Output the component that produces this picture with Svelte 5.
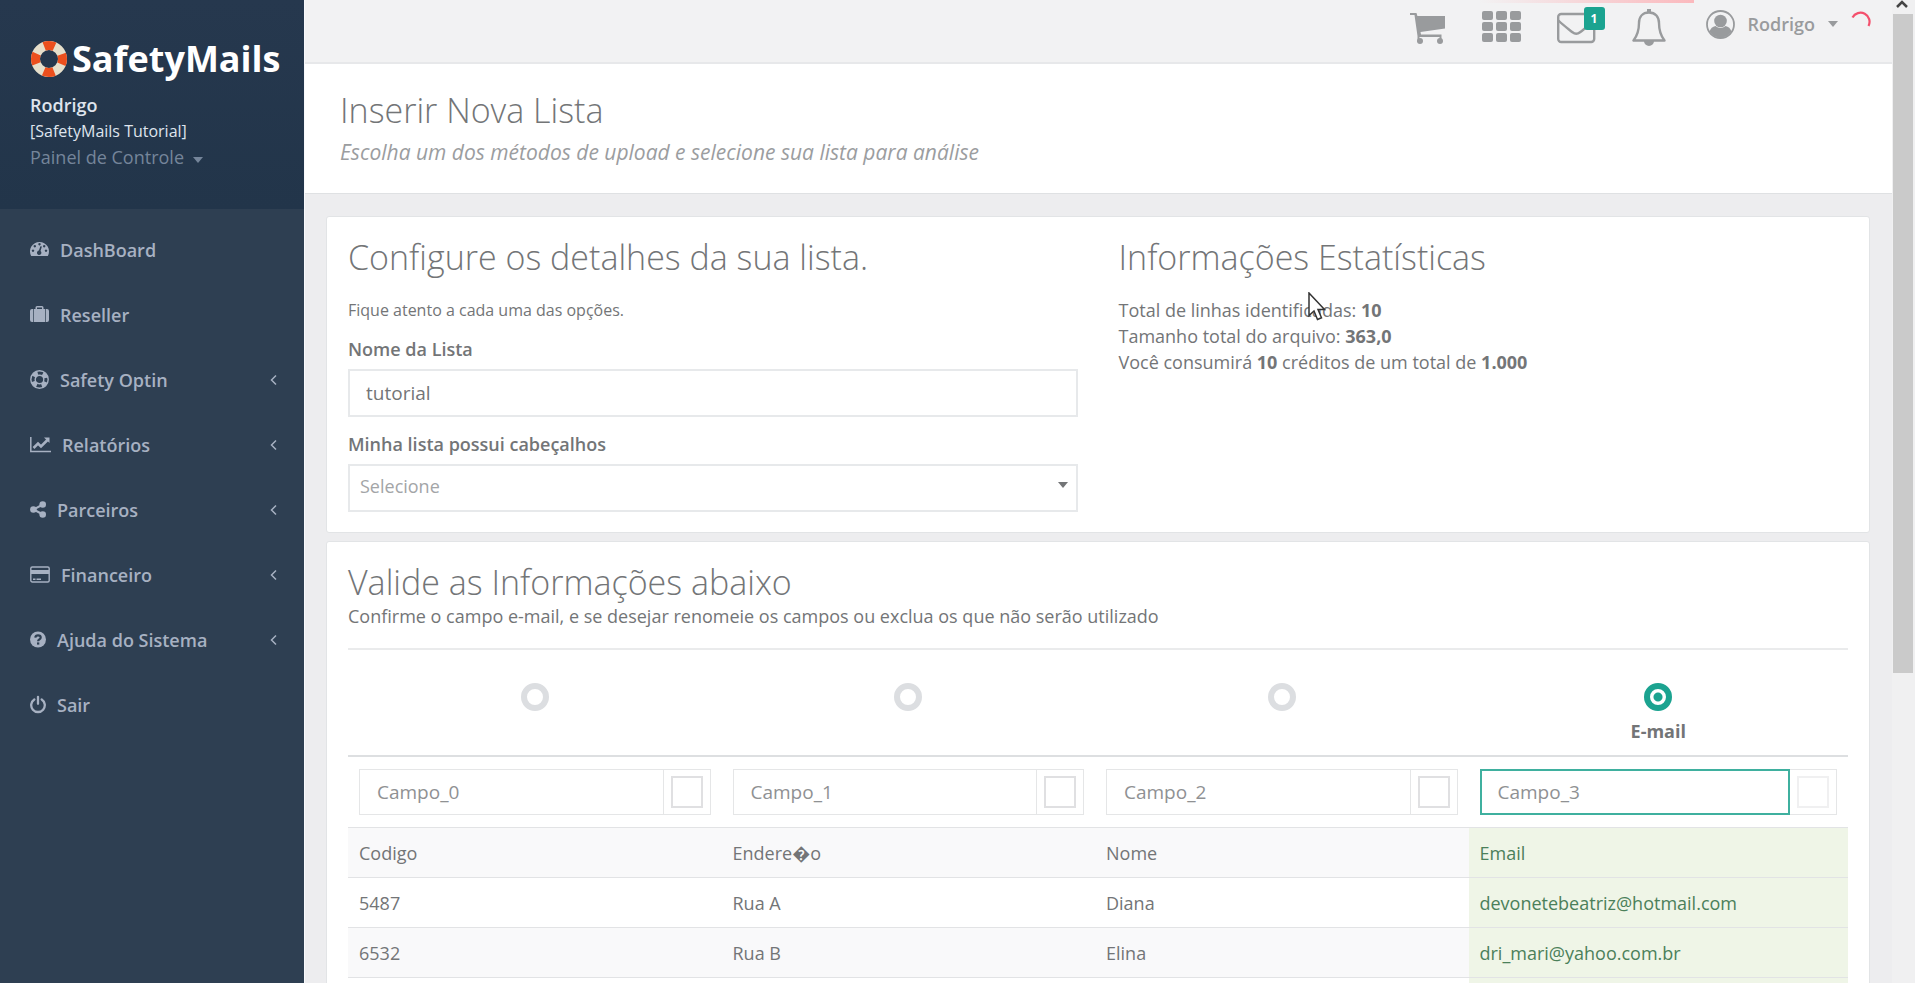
<script>
  let listName = 'tutorial';
  let hasHeader = '';
  let emailColumn = 3;

  const menu = [
    {
      label: 'DashBoard',
      width: 19,
      icon: '<path fill="currentColor" fill-rule="evenodd" d="M1.2 16A9.5 9.5 0 1 1 17.800 16ZM9.500 3a1.200 1.200 0 1 0 .01 0ZM4.800 5a1.200 1.200 0 1 0 .01 0ZM14.200 5a1.200 1.200 0 1 0 .01 0ZM3 9.500a1.200 1.200 0 1 0 .01 0ZM16 9.500a1.200 1.200 0 1 0 .01 0ZM10.400 6.200 8.900 10.600a2.200 2.200 0 1 0 1.600.400L11.900 6.600Z"/>'
    },
    {
      label: 'Reseller',
      width: 19,
      icon: '<path fill="currentColor" d="M0 6a2 2 0 0 1 2-2h1v13H2a2 2 0 0 1-2-2ZM3.700 4h1.800V2.500A1.500 1.500 0 0 1 7 1h5a1.500 1.500 0 0 1 1.500 1.500V4h1.800v13H3.700ZM7 2.500V4h5V2.500ZM16 4h1a2 2 0 0 1 2 2v9a2 2 0 0 1-2 2h-1Z"/>'
    },
    {
      label: 'Safety Optin',
      width: 19,
      children: true,
      icon: '<g fill="none" stroke="currentColor"><circle cx="9.500" cy="9.500" r="8.700" stroke-width="1.400"/><circle cx="9.500" cy="9.500" r="4.300" stroke-width="1.400"/><circle cx="9.500" cy="9.500" r="6.500" stroke-width="4.500" stroke-dasharray="5.100 5.110" stroke-dashoffset="-2.550"/></g>'
    },
    {
      label: 'Relatórios',
      width: 21,
      children: true,
      icon: '<path fill="none" stroke="currentColor" stroke-width="1.500" d="M.8 2v14.500H21"/><path fill="none" stroke="currentColor" stroke-width="2.600" d="m3.500 13 4.500-4.500 3 3 6.500-6.500"/><path fill="currentColor" d="M14 2.500h5.500V8Z"/>'
    },
    {
      label: 'Parceiros',
      width: 16,
      children: true,
      icon: '<path fill="none" stroke="currentColor" stroke-width="2" d="M13 4.500 3.500 9.500l9.500 5"/><g fill="currentColor"><circle cx="12.700" cy="4.500" r="3.300"/><circle cx="3.400" cy="9.500" r="3.300"/><circle cx="12.700" cy="14.500" r="3.300"/></g>'
    },
    {
      label: 'Financeiro',
      width: 20,
      children: true,
      icon: '<rect x=".8" y="2" width="18.400" height="15" rx="1.500" fill="none" stroke="currentColor" stroke-width="1.400"/><path fill="currentColor" d="M1 5h18v4H1ZM3 13.500h2.500V15H3ZM6.500 13.500H11V15H6.500Z"/>'
    },
    {
      label: 'Ajuda do Sistema',
      width: 16,
      children: true,
      icon: '<circle cx="8" cy="9.500" r="8" fill="currentColor"/><path fill="none" stroke="#2e3f52" stroke-width="2.200" d="M5.300 7.700c.2-1.700 1.300-2.300 2.700-2.300 1.600 0 2.700.8 2.700 2.100 0 1.800-2.600 1.900-2.600 3.700"/><path fill="#2e3f52" d="M7 12.400h2.300v2.200H7Z"/>'
    },
    {
      label: 'Sair',
      width: 16,
      icon: '<path fill="none" stroke="currentColor" stroke-width="2.300" stroke-linecap="round" d="M4.300 4.500a6.800 6.800 0 1 0 7.400 0M8 1.800v7"/>'
    }
  ];

  let fields = ['Campo_0', 'Campo_1', 'Campo_2', 'Campo_3'];

  const rows = [
    ['Codigo', 'Endere\uFFFDo', 'Nome', 'Email'],
    ['5487', 'Rua A', 'Diana', 'devonetebeatriz@hotmail.com'],
    ['6532', 'Rua B', 'Elina', 'dri_mari@yahoo.com.br'],
    ['', '', '', '']
  ];
</script>

<div class="app">
  <aside class="sidebar">
    <div class="profile">
      <a class="logo" href="#home">
        <svg width="38" height="38" viewBox="0 0 38 38" aria-hidden="true">
          <circle cx="19" cy="19" r="13.500" fill="none" stroke="#e6dfcb" stroke-width="9" />
          <circle cx="19" cy="19" r="13.500" fill="none" stroke="#ec4f1d" stroke-width="9" stroke-dasharray="10.600 10.600" stroke-dashoffset="5.300" />
        </svg>
        <span>SafetyMails</span>
      </a>
      <strong class="name">Rodrigo</strong>
      <span class="company">[SafetyMails Tutorial]</span>
      <button class="panel-toggle" type="button">Painel de Controle <i class="caret"></i></button>
    </div>
    <nav>
      {#each menu as item}
        <a href="#menu">
          <svg width={item.width} height="19" viewBox="0 0 {item.width} 19" aria-hidden="true">{@html item.icon}</svg>
          <span>{item.label}</span>
          {#if item.children}
            <svg class="arrow" width="7" height="12" viewBox="0 0 7 12" aria-hidden="true">
              <path d="M6 1.500 1.500 6 6 10.500" fill="none" stroke="currentColor" stroke-width="1.500" />
            </svg>
          {/if}
        </a>
      {/each}
    </nav>
  </aside>

  <main>
    <header class="topbar">
      <button type="button" aria-label="Carrinho">
        <svg width="36" height="32" viewBox="0 0 36 32">
          <path d="M0 1h6.500l.9 3H35v12.500L10.500 20l.5 2.500h20.500V30h-2v-5H9.500v5h-2v-6L4.500 3H0Z" fill="currentColor" />
          <circle cx="10" cy="29" r="3" fill="currentColor" />
          <circle cx="30" cy="29" r="3" fill="currentColor" />
        </svg>
      </button>
      <button type="button" aria-label="Aplicativos">
        <svg width="39" height="34" viewBox="0 0 39 34">
          <g fill="currentColor">
            {#each [0, 11, 22] as y}
              {#each [0, 14, 28] as x}
                <rect {x} {y} width="11" height="9" rx="2" />
              {/each}
            {/each}
          </g>
        </svg>
      </button>
      <button type="button" class="mail" aria-label="Mensagens">
        <svg width="39" height="32" viewBox="0 0 39 32">
          <rect x="1.200" y="2" width="36" height="28" rx="3" fill="none" stroke="currentColor" stroke-width="2.400" />
          <path d="M1.500 8.500c5 5 10 8.500 14 11.800 2.500 2 5 2 7.500 0 4-3.300 9-6.800 14-11.800" fill="none" stroke="currentColor" stroke-width="2.400" />
        </svg>
        <span class="badge">1</span>
      </button>
      <button type="button" aria-label="Alertas">
        <svg width="34" height="38" viewBox="0 0 34 38">
          <path d="M17 3.500C10.500 3.500 7 8 7 14c0 9-2 13-5.500 17.500h31C29 27 27 23 27 14c0-6-3.500-10.500-10-10.500Z" fill="none" stroke="currentColor" stroke-width="2.400" stroke-linejoin="round" />
          <path d="M15 0h4v4h-4ZM12 32h10a5 5 0 0 1-10 0Z" fill="currentColor" />
        </svg>
      </button>
      <button type="button" class="user">
        <svg width="29" height="29" viewBox="0 0 29 29" aria-hidden="true">
          <circle cx="14.500" cy="14.500" r="13.500" fill="none" stroke="currentColor" stroke-width="1.800" />
          <circle cx="14.500" cy="11" r="6.300" fill="currentColor" />
          <path d="M3.500 21.500c1-3 3-5 6-5.500 3 2.500 7 2.500 10 0 3 .5 5 2.500 6 5.500a13 13 0 0 1-22 0Z" fill="currentColor" />
        </svg>
        <span>Rodrigo</span>
        <i class="caret"></i>
      </button>
      <svg class="spinner" width="20" height="20" viewBox="0 0 20 20" aria-hidden="true">
        <path d="M1.500 8.500A9 9 0 0 1 17.500 17" fill="none" stroke="#f4506c" stroke-width="2.200" />
      </svg>
    </header>

    <section class="heading">
      <h1>Inserir Nova Lista</h1>
      <p>Escolha um dos métodos de upload e selecione sua lista para análise</p>
    </section>

    <div class="content">
      <section class="card details">
        <form on:submit|preventDefault>
          <h2>Configure os detalhes da sua lista.</h2>
          <small>Fique atento a cada uma das opções.</small>
          <label for="listName">Nome da Lista</label>
          <input id="listName" type="text" bind:value={listName} />
          <label for="hasHeader">Minha lista possui cabeçalhos</label>
          <div class="select">
            <select id="hasHeader" bind:value={hasHeader}>
              <option value="">Selecione</option>
              <option value="1">Sim</option>
              <option value="0">Não</option>
            </select>
            <i class="caret"></i>
          </div>
        </form>
        <div class="stats">
          <h2>Informações Estatísticas</h2>
          <p>
            Total de linhas identificadas: <b>10</b><br />
            Tamanho total do arquivo: <b>363,0</b><br />
            Você consumirá <b>10</b> créditos de um total de <b>1.000</b>
          </p>
          <svg class="pointer" width="20" height="30" viewBox="0 0 20 30" aria-hidden="true">
            <path d="M1 1v22.500l5-4.500 3.500 8.500 4-1.700-3.500-8.300h6.500Z" fill="#fff" stroke="#333" stroke-width="1.500" />
          </svg>
        </div>
      </section>

      <section class="card">
        <h2>Valide as Informações abaixo</h2>
        <p>Confirme o campo e-mail, e se desejar renomeie os campos ou exclua os que não serão utilizado</p>
        <table>
          <thead>
            <tr>
              {#each fields as field, i}
                <th>
                  <label>
                    <input type="radio" name="emailColumn" value={i} bind:group={emailColumn} aria-label={field} />
                    {#if emailColumn === i}<span>E-mail</span>{/if}
                  </label>
                </th>
              {/each}
            </tr>
          </thead>
          <tbody>
            <tr class="fields">
              {#each fields as field, i}
                <td>
                  <div class="group" class:active={emailColumn === i}>
                    <input type="text" aria-label="Nome do campo {i}" bind:value={fields[i]} />
                    <span class="addon">
                      <input type="checkbox" aria-label="Excluir {field}" disabled={emailColumn === i} />
                    </span>
                  </div>
                </td>
              {/each}
            </tr>
            {#each rows as row}
              <tr>
                {#each row as cell, i}
                  <td class:email={emailColumn === i}>{cell}</td>
                {/each}
              </tr>
            {/each}
          </tbody>
        </table>
      </section>
    </div>
  </main>

  <div class="scrollbar" aria-hidden="true">
    <svg width="23" height="14" viewBox="0 0 23 14">
      <path d="m5 7 5-5 5 5" fill="none" stroke="#444" stroke-width="2.500" />
    </svg>
    <div class="thumb"></div>
  </div>
</div>

<style>
  :global(body) {
    margin: 0;
    font-family: 'Open Sans', 'Noto Sans', sans-serif;
    font-size: 18px;
    line-height: 26px;
    color: #737577;
  }

  .app {
    display: flex;
    height: 100vh;
    overflow: hidden;
    background: #ededef;
  }

  h1, h2, p {
    margin: 0;
  }

  a {
    text-decoration: none;
  }

  button {
    padding: 0;
    border: 0;
    background: none;
    font: inherit;
    color: inherit;
    cursor: pointer;
  }

  input, select {
    box-sizing: border-box;
    font: inherit;
    color: inherit;
    margin: 0;
  }

  svg {
    display: block;
    flex: none;
  }

  .caret {
    display: inline-block;
    border: 5px solid transparent;
    border-top: 6px solid currentColor;
    border-bottom: 0;
  }

  .sidebar {
    flex: none;
    width: 304px;
    background: #2e3f52;
    color: #a7b1c2;
  }

  .profile {
    box-sizing: border-box;
    display: flex;
    flex-direction: column;
    align-items: flex-start;
    height: 209px;
    padding: 34px 20px 0 30px;
    background: linear-gradient(#26384e, #22354a);
  }

  .logo {
    display: flex;
    align-items: center;
    gap: 4px;
    margin-bottom: 8px;
    font-size: 36px;
    font-weight: 700;
    line-height: 50px;
    color: #fff;
  }

  .name {
    font-weight: 600;
    color: #dfe4ed;
  }

  .company {
    font-size: 16px;
    color: #dfe4ed;
  }

  .panel-toggle {
    color: #75859a;
  }

  .panel-toggle .caret {
    margin-left: 4px;
    vertical-align: 1px;
  }

  nav {
    padding-top: 8px;
  }

  nav a {
    display: flex;
    align-items: center;
    gap: 11px;
    height: 65px;
    padding: 0 27px 0 30px;
    font-weight: 600;
    color: inherit;
  }

  .arrow {
    margin-left: auto;
  }

  main {
    flex: 1;
    min-width: 0;
    border-left: 1px solid #f8f9fc;
  }

  .topbar {
    position: relative;
    box-sizing: border-box;
    display: flex;
    align-items: flex-start;
    justify-content: flex-end;
    gap: 36px;
    height: 64px;
    padding: 9px 21px 0 0;
    border-bottom: 2px solid #e7e8ea;
    background: #f2f2f3;
    color: #999b9d;
  }

  .topbar::before {
    content: '';
    position: absolute;
    top: 0;
    right: 198px;
    width: 215px;
    height: 3px;
    background: linear-gradient(to right, transparent, #fbb9bd);
  }

  .topbar button {
    display: flex;
    align-items: center;
    height: 38px;
  }

  .mail {
    position: relative;
  }

  .badge {
    position: absolute;
    top: -2px;
    right: -9px;
    width: 21px;
    border-radius: 3px;
    background: #1ba390;
    font-size: 12px;
    font-weight: 700;
    line-height: 23px;
    text-align: center;
    color: #fff;
  }

  .topbar .user {
    gap: 13px;
    height: 30px;
    margin-left: 4px;
    font-weight: 600;
  }

  .spinner {
    margin-left: -23px;
  }

  .heading {
    padding: 25px 35px 20px;
    border-bottom: 1px solid #dfe1e3;
    background: #fff;
  }

  h1, h2 {
    font-size: 34px;
    font-weight: 300;
    line-height: 42px;
  }

  .heading p {
    font-size: 21px;
    font-style: italic;
    line-height: 42px;
    color: #9b9d9f;
  }

  .content {
    padding: 22px 22px 0 21px;
  }

  .card {
    margin-bottom: 8px;
    padding: 19px 21px 20px;
    border: 1px solid #e2e4e6;
    border-radius: 3px;
    background: #fff;
  }

  .details {
    display: grid;
    grid-template-columns: 1fr 1fr;
    gap: 41px;
  }

  .details h2 {
    margin-bottom: 19px;
  }

  small {
    display: block;
    margin-bottom: 13px;
    font-size: 16px;
  }

  form label {
    display: block;
    margin-bottom: 7px;
    font-weight: 600;
  }

  form > input,
  select {
    display: block;
    width: 100%;
    height: 48px;
    border: 2px solid #e7e9eb;
    background: #fff;
  }

  form > input {
    margin-bottom: 14px;
    padding: 0 16px;
    font-size: 19px;
  }

  .select {
    position: relative;
  }

  .select .caret {
    position: absolute;
    top: 18px;
    right: 10px;
  }

  select {
    padding: 0 10px 4px;
    appearance: none;
    color: #a3a5a7;
  }

  .stats {
    position: relative;
  }

  .pointer {
    position: absolute;
    top: 56px;
    left: 189px;
  }

  table {
    width: 100%;
    margin-top: 19px;
    table-layout: fixed;
    border-collapse: collapse;
  }

  th {
    height: 105px;
    padding: 0;
    border-top: 2px solid #eaebec;
    border-bottom: 2px solid #dddfe1;
    vertical-align: top;
  }

  th:not(:last-child) {
    width: 24.9%;
  }

  th label {
    display: flex;
    flex-direction: column;
    align-items: center;
    gap: 7px;
    padding-top: 33px;
    font-weight: 700;
  }

  input[type='radio'] {
    width: 28px;
    height: 28px;
    border: 6px solid #dcdee1;
    border-radius: 50%;
    appearance: none;
  }

  input[type='radio']:checked {
    border-color: #1ba390;
    background: radial-gradient(#1ba390 4px, #fff 5px);
  }

  td {
    height: 49px;
    padding: 0 11px;
    border-top: 1px solid #e2e3e5;
  }

  tbody tr:nth-child(even) {
    background: #f9f9fa;
  }

  .fields td {
    height: 70px;
  }

  .group {
    display: flex;
    height: 46px;
  }

  .group input[type='text'] {
    flex: 1;
    min-width: 0;
    padding: 0 17px;
    border: 1px solid #e5e6e7;
    background: #fff;
    font-size: 19px;
    color: #8f9193;
  }

  .group.active input[type='text'] {
    padding: 0 16px;
    border: 2px solid #3fb09f;
  }

  .addon {
    box-sizing: border-box;
    display: flex;
    align-items: center;
    justify-content: center;
    width: 47px;
    border: 1px solid #e5e6e7;
    border-left: 0;
  }

  input[type='checkbox'] {
    width: 32px;
    height: 32px;
    border: 2px solid #e0e0e2;
    appearance: none;
  }

  input[type='checkbox']:disabled {
    border-color: #f0f0f1;
  }

  td.email {
    background: #eff5e7;
    color: #4b805a;
  }

  .scrollbar {
    flex: none;
    width: 23px;
    background: #f0f0f1;
  }

  .thumb {
    width: 20px;
    height: 67vh;
    margin-left: 1px;
    background: #cacaca;
  }
</style>
